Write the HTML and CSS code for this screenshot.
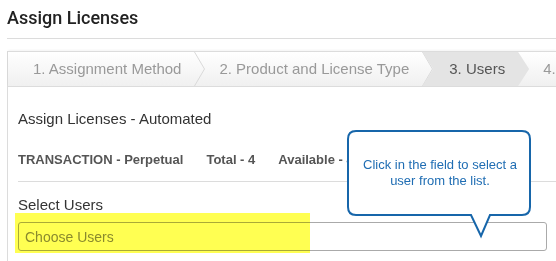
FILE: index.html
```html
<!DOCTYPE html>
<html lang="en">
<head>
    <meta charset="UTF-8">
    <meta name="viewport" content="width=device-width, initial-scale=1.0">
    <title>Assign Licenses</title>
    <link rel="stylesheet" href="styles.css">
</head>
<body>

<div class="page">
    <h1 class="page-title">Assign Licenses</h1>

    <div class="panel">
        <div class="steps">
            <div class="step">1. Assignment Method
                <svg class="step-sep" width="11" height="34" viewBox="0 0 11 34"><path d="M0.5 0 L10.5 17 L0.5 34" fill="none" stroke="#d9d9d9"/></svg>
            </div>
            <div class="step">2. Product and License Type
                <svg class="step-sep" width="11" height="34" viewBox="0 0 11 34"><path d="M0.5 0 L10.5 17 L0.5 34" fill="none" stroke="#d9d9d9"/></svg>
            </div>
            <div class="step active">3. Users</div>
            <div class="step">4. Review</div>
        </div>

        <div class="panel-body">
            <h2 class="section-title">Assign Licenses - Automated</h2>

            <div class="summary">
                <span>TRANSACTION - Perpetual</span>
                <span>Total - 4</span>
                <span>Available - 4</span>
            </div>

            <label class="field-label" for="users">Select Users</label>
            <div class="field">
                <input type="text" id="users" placeholder="Choose Users">
                <div class="highlight"></div>
            </div>
        </div>

        <div class="callout">
            <svg class="callout-shape" width="186" height="110" viewBox="0 0 186 110">
                <path d="M9 1 H175 Q183 1 183 9 V77 Q183 85 175 85 H143 L134 106 L124 85 H9 Q1 85 1 77 V9 Q1 1 9 1 Z" fill="#fff" stroke="#1766aa" stroke-width="2"/>
            </svg>
            <p class="callout-text">Click in the field to select a user from the list.</p>
        </div>
    </div>
</div>

</body>
</html>
```

FILE: styles.css
```css
body {
    margin: 0;
    font-family: "Liberation Sans", Arial, sans-serif;
    background-color: #fff;
    color: #333;
    overflow: hidden;
}
.page {
    padding: 8px 0 0 7px;
    height: 100vh;
    box-sizing: border-box;
    overflow: hidden;
}
.page-title {
    margin: 0;
    padding-bottom: 10px;
    border-bottom: 1px solid #dcdcdc;
    font-family: Roboto, "Liberation Sans", sans-serif;
    font-size: 18px;
    font-weight: 500;
    line-height: 20px;
    color: #222;
}
.panel {
    position: relative;
    margin-top: 12px;
    border-left: 1px solid #dcdcdc;
    height: calc(100vh - 51px);
}
.steps {
    display: flex;
    height: 34px;
    overflow: hidden;
    border-top: 1px solid #dcdcdc;
    border-bottom: 1px solid #dcdcdc;
    background: linear-gradient(#ffffff, #f0f0f0);
    box-shadow: 0 -1px 2px rgba(0, 0, 0, 0.05);
}
.step {
    position: relative;
    flex: none;
    padding: 0 24px 0 25px;
    margin-right: -11px;
    line-height: 34px;
    font-size: 15px;
    color: #999;
    white-space: nowrap;
}
.step-sep {
    position: absolute;
    top: 0;
    right: 0;
}
.step.active {
    background-color: #e4e4e4;
    color: #555;
    clip-path: polygon(0 0, calc(100% - 11px) 0, 100% 50%, calc(100% - 11px) 100%, 0 100%, 11px 50%);
    padding-left: 27px;
}
.panel-body {
    padding: 0 0 0 10px;
}
.section-title {
    margin: 23px 0 0;
    font-size: 15px;
    font-weight: normal;
    line-height: 18px;
    color: #333;
}
.summary {
    display: flex;
    gap: 23px;
    margin-top: 24px;
    padding-bottom: 13px;
    border-bottom: 1px solid #dcdcdc;
    font-size: 13px;
    font-weight: bold;
    line-height: 16px;
    color: #555;
}
.field-label {
    display: block;
    margin-top: 14px;
    font-size: 15px;
    line-height: 18px;
    color: #333;
}
.field {
    position: relative;
    margin-top: 8px;
    width: 529px;
}
.field input {
    box-sizing: border-box;
    width: 100%;
    height: 29px;
    padding: 0 6px;
    border: 1px solid #aaa;
    border-radius: 3px;
    font-family: "Liberation Sans", Arial, sans-serif;
    font-size: 14px;
}
.field input::placeholder {
    color: #8a8a8a;
}
.highlight {
    position: absolute;
    left: -3px;
    top: -9px;
    width: 295px;
    height: 40px;
    background-color: #ffff52;
    mix-blend-mode: multiply;
    pointer-events: none;
}
.callout {
    position: absolute;
    left: 339px;
    top: 79px;
    width: 186px;
    height: 110px;
}
.callout-shape {
    position: absolute;
    left: 0;
    top: 0;
}
.callout-text {
    position: relative;
    margin: 0;
    padding: 27px 10px 0;
    text-align: center;
    font-size: 13px;
    line-height: 16px;
    color: #1f6db3;
}
```
